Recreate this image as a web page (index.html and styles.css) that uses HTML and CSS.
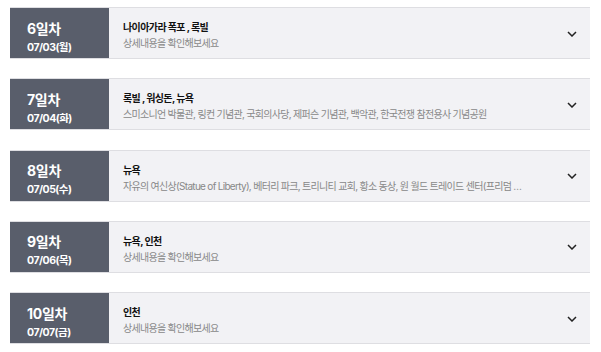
FILE: index.html
```html
<!DOCTYPE html>
<html lang="ko">
<head>
<meta charset="utf-8">
<link rel="stylesheet" href="styles.css">
</head>
<body>
<ul class="days">
  <li class="day">
    <div class="day-badge"><strong class="day-num">6일차</strong><span class="day-date">07/03(월)</span></div>
    <div class="day-info"><p class="day-title">나이아가라 폭포 , 록빌</p><p class="day-desc">상세내용을 확인해보세요</p></div>
    <svg class="chev" width="10" height="6" viewBox="0 0 10 6"><path d="M1 1 L5 5 L9 1" fill="none" stroke="#222" stroke-width="1.5"/></svg>
  </li>
  <li class="day">
    <div class="day-badge"><strong class="day-num">7일차</strong><span class="day-date">07/04(화)</span></div>
    <div class="day-info"><p class="day-title">록빌 , 워싱돈, 뉴욕</p><p class="day-desc">스미소니언 박물관, 링컨 기념관, 국회의사당, 제퍼슨 기념관, 백악관, 한국전쟁 참전용사 기념공원</p></div>
    <svg class="chev" width="10" height="6" viewBox="0 0 10 6"><path d="M1 1 L5 5 L9 1" fill="none" stroke="#222" stroke-width="1.5"/></svg>
  </li>
  <li class="day">
    <div class="day-badge"><strong class="day-num">8일차</strong><span class="day-date">07/05(수)</span></div>
    <div class="day-info"><p class="day-title">뉴욕</p><p class="day-desc">자유의 여신상(Statue of Liberty), 베터리 파크, 트리니티 교회, 황소 동상, 원 월드 트레이드 센터(프리덤 타워), 타임스퀘어</p></div>
    <svg class="chev" width="10" height="6" viewBox="0 0 10 6"><path d="M1 1 L5 5 L9 1" fill="none" stroke="#222" stroke-width="1.5"/></svg>
  </li>
  <li class="day">
    <div class="day-badge"><strong class="day-num">9일차</strong><span class="day-date">07/06(목)</span></div>
    <div class="day-info"><p class="day-title">뉴욕, 인천</p><p class="day-desc">상세내용을 확인해보세요</p></div>
    <svg class="chev" width="10" height="6" viewBox="0 0 10 6"><path d="M1 1 L5 5 L9 1" fill="none" stroke="#222" stroke-width="1.5"/></svg>
  </li>
  <li class="day">
    <div class="day-badge"><strong class="day-num">10일차</strong><span class="day-date">07/07(금)</span></div>
    <div class="day-info"><p class="day-title">인천</p><p class="day-desc">상세내용을 확인해보세요</p></div>
    <svg class="chev" width="10" height="6" viewBox="0 0 10 6"><path d="M1 1 L5 5 L9 1" fill="none" stroke="#222" stroke-width="1.5"/></svg>
  </li>
</ul>
</body>
</html>
```

FILE: styles.css
```css
html, body {
  margin: 0;
  padding: 0;
  background: #fff;
}
body {
  font-family: Inter, "Noto Sans CJK KR", "Noto Sans", sans-serif;
  padding: 7px 11px 0 10px;
}
.days {
  list-style: none;
  margin: 0;
  padding: 0;
  display: flex;
  flex-direction: column;
  gap: 19.25px;
}
.day {
  display: flex;
  align-items: stretch;
  height: 50px;
  background: #f2f2f5;
  border-top: 1px solid #dedee2;
  border-bottom: 1px solid #dedee2;
}
.day-badge {
  width: 82px;
  flex: none;
  background: #595e6b;
  color: #fff;
  padding: 8px 0 0 17px;
  display: flex;
  flex-direction: column;
  justify-content: center;
  gap: 4px;
}
.day-num {
  font-size: 14px;
  font-weight: 700;
  line-height: 17px;
  letter-spacing: -0.3px;
}
.day-date {
  font-size: 10.5px;
  font-weight: 700;
  line-height: 14px;
  letter-spacing: -0.5px;
}
.day-info {
  flex: 1;
  min-width: 0;
  padding: 4px 0 0 14px;
  display: flex;
  flex-direction: column;
  justify-content: center;
  gap: 2px;
}
.day-title {
  margin: 0;
  font-size: 10px;
  font-weight: 700;
  color: #111;
  line-height: 14px;
  letter-spacing: -0.6px;
}
.day-desc {
  margin: 0;
  font-size: 10px;
  color: #888;
  line-height: 14px;
  letter-spacing: -0.7px;
  white-space: nowrap;
  overflow: hidden;
  text-overflow: ellipsis;
  max-width: 402px;
}
.chev {
  flex: none;
  align-self: center;
  margin: 1px 13px 0 20px;
}
```
